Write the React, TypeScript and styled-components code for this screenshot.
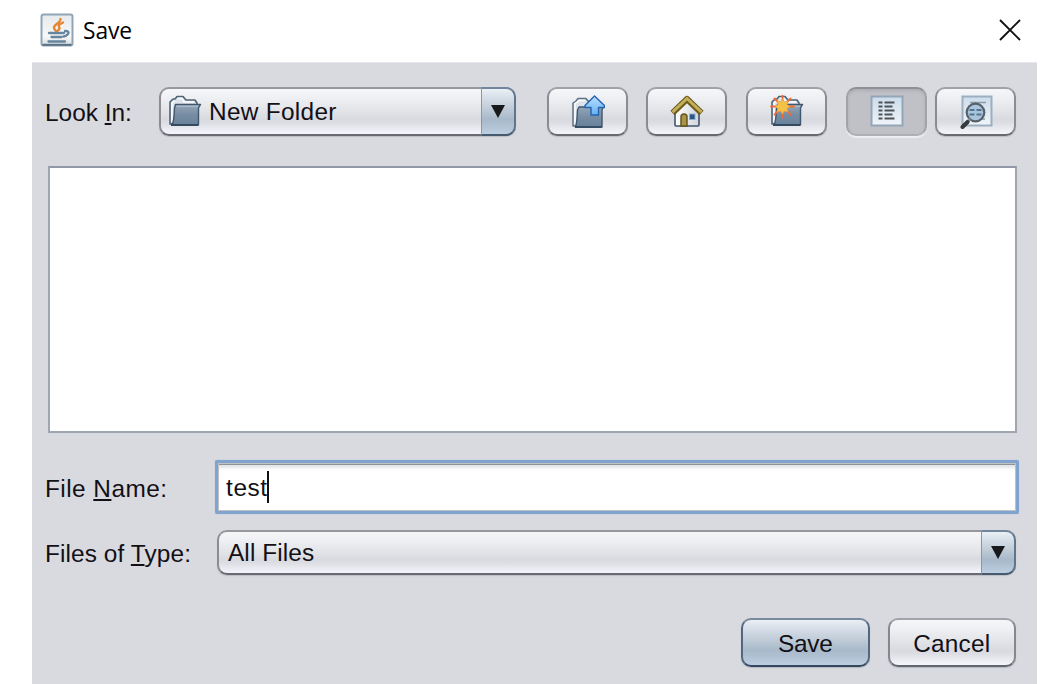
import React from "react";
import styled, { createGlobalStyle, css } from "styled-components";

const GlobalStyle = createGlobalStyle`
  *, *::before, *::after { box-sizing: border-box; }
  body { margin: 0; background: #fff; overflow: hidden; }
`;

const face = css`
  background: linear-gradient(#f7f8fa 0%, #eff0f3 22%, #e3e4e8 48%, #d8dae0 66%, #dddfe4 74%, #f2f4f9 94%, #f5f7fb 100%) border-box;
`;
const blueFace = css`
  background: linear-gradient(#f0f4f8 0%, #d8e0e9 20%, #bfcbd7 45%, #a8b9ca 66%, #adbfd0 76%, #c1d2e4 100%) border-box;
`;

const Dialog = styled.main`
  width: 1005px;
  height: 684px;
  margin-left: 32px;
  display: flex;
  flex-direction: column;
  font-family: "Liberation Sans", Arial, sans-serif;
  font-size: 24.4px;
  color: #121016;
`;

const TitleBar = styled.header`
  height: 62px;
  flex: none;
  display: flex;
  align-items: center;
  padding: 0 16px 2px 8px;
`;

const Title = styled.h1`
  flex: 1;
  margin: 2px 0 0 9px;
  font: 400 22.8px/32px "Open Sans", sans-serif;
  letter-spacing: -0.1px;
  color: #000;
`;

const CloseButton = styled.button`
  border: 0;
  padding: 0;
  background: none;
  width: 22px;
  height: 22px;
  display: flex;
`;

const Panel = styled.section`
  flex: 1;
  background: #d9dadf;
  border-top: 1px solid #e6e7ea;
  padding: 24px 21px 0 13px;
  display: flex;
  flex-direction: column;
`;

const Toolbar = styled.div`
  display: flex;
  height: 49px;
  flex: none;
`;

const Label = styled.label<{ $width: number; $height: number; $spacing?: number }>`
  flex: none;
  width: ${(p) => p.$width}px;
  line-height: ${(p) => p.$height}px;
  letter-spacing: ${(p) => p.$spacing ?? 0}px;
  white-space: nowrap;
`;

const Mnemonic = styled.span`
  text-decoration: underline;
  text-decoration-thickness: 2px;
  text-underline-offset: 2px;
  text-decoration-skip-ink: none;
`;

const Combo = styled.div<{ $width?: number; $height: number; $left: number }>`
  ${face}
  width: ${(p) => (p.$width ? `${p.$width}px` : "auto")};
  flex: ${(p) => (p.$width ? "none" : "1")};
  height: ${(p) => p.$height}px;
  display: flex;
  align-items: center;
  padding-left: ${(p) => p.$left}px;
  border: 2px solid #8b8d93;
  border-top-color: #96989e;
  border-bottom-color: #686b72;
  border-right: 0;
  border-radius: 10px;
  box-shadow: 0 1px 1px #bbbdc3;
`;

const ComboText = styled.span<{ $gap?: number; $spacing?: number }>`
  flex: 1;
  margin-left: ${(p) => p.$gap ?? 0}px;
  padding-top: 1px;
  letter-spacing: ${(p) => p.$spacing ?? 0}px;
  white-space: nowrap;
`;

const ComboArrow = styled.span`
  ${blueFace}
  align-self: stretch;
  width: 35px;
  margin: -2px 0;
  border: 2px solid #5e758c;
  border-top-color: #71869c;
  border-bottom-color: #465b70;
  border-left: 1px solid #8499ae;
  border-radius: 0 10px 10px 0;
  display: flex;
  align-items: center;
  justify-content: center;
`;

const ToolButton = styled.button<{ $left: number; $pressed?: boolean }>`
  ${face}
  flex: none;
  width: 81px;
  height: 49px;
  margin-left: ${(p) => p.$left}px;
  padding: 0;
  display: flex;
  align-items: center;
  justify-content: center;
  border: 2px solid #8b8c92;
  border-top-color: #a0a2a7;
  border-bottom-color: #686a70;
  border-radius: 10px;
  box-shadow: 0 1px 1px #bbbdc3;
  ${(p) =>
    p.$pressed &&
    css`
      background: #c0c1c6;
      border-color: #8e9095 #a2a3a9 #adafb4;
      box-shadow: 0 2px 1px #eceef2, inset 0 2px 3px #adaeb4;
    `}
`;

const FileList = styled.div`
  flex: none;
  height: 267px;
  margin: 30px -1px 0 3px;
  background: #fff;
  border: 2px solid #a0a6b0;
  border-top-color: #9299a6;
`;

const Row = styled.div<{ $top: number }>`
  display: flex;
  flex: none;
  margin-top: ${(p) => p.$top}px;
`;

const TextField = styled.div`
  flex: 1;
  height: 54px;
  margin-right: -3px;
  border: 3px solid #81a4cf;
  border-radius: 2px;
  background: #fff;
  box-shadow: 0 0 1px #8eafd7, inset 0 0 0 1px #bfc1c5, inset 0 2px 0 #8f9297, inset 0 5px 3px #e4e5e8;
  display: flex;
  align-items: center;
  padding: 2px 0 0 8px;
  letter-spacing: 0.6px;
`;

const Caret = styled.span`
  width: 2px;
  height: 32px;
  background: #111;
  margin: -2px 0 0 -1px;
`;

const Actions = styled.div`
  display: flex;
  justify-content: flex-end;
  gap: 18px;
  margin-top: 41px;
`;

const ActionButton = styled.button<{ $primary?: boolean }>`
  ${(p) => (p.$primary ? blueFace : face)}
  width: 128.5px;
  height: 49px;
  border: 2px solid ${(p) => (p.$primary ? "#52677e" : "#85878d")};
  border-top-color: ${(p) => (p.$primary ? "#788a9c" : "#a1a3a9")};
  border-bottom-color: ${(p) => (p.$primary ? "#34495f" : "#63666d")};
  border-radius: 10px;
  box-shadow: 0 1px 1px #b5b8bf;
  padding: 2px 0 0;
  font: inherit;
  color: inherit;
  letter-spacing: ${(p) => (p.$primary ? "-0.3px" : "0.2px")};
`;

const FolderShape = () => (
  <>
    <path d="M2 29V7L5 4H7L9 1.5H15L18 5H27L29 8V12L7 28Z" fill="#dce3ea" stroke="#4e6376" strokeWidth="1.6" strokeLinejoin="round" />
    <path d="M4 27V8L7 6M10 3.5H14L16 7H26" fill="none" stroke="#fafcfe" strokeWidth="1.5" />
    <path d="M7.5 9.5H32.5L30.5 13V30H4Q6 27 6.5 13Z" fill="url(#folderFront)" stroke="#40566c" strokeWidth="1.4" strokeLinejoin="round" />
    <path d="M8.5 11.3H30" stroke="#a9b9c8" strokeWidth="1.5" />
    <path d="M3 30H30" stroke="#344a60" strokeWidth="2" />
  </>
);

const FolderIcon = () => (
  <svg width="34" height="34" viewBox="0 0 34 34">
    <FolderShape />
  </svg>
);

const UpFolderIcon = () => (
  <svg width="34" height="34" viewBox="0 0 34 34">
    <path d="M2 31V8L5 6L7 3.5H15L17 6H27V31Z" fill="#dce3ea" stroke="#5d7184" strokeWidth="1.5" strokeLinejoin="round" />
    <path d="M4 29V9L8 5.5H14" fill="none" stroke="#fafcfe" strokeWidth="1.5" />
    <path d="M8 12H32L31 15V32H4.500Q6 28 6.500 15Z" fill="url(#folderFront)" stroke="#40566c" strokeWidth="1.4" strokeLinejoin="round" />
    <path d="M4 32H31" stroke="#344a60" strokeWidth="1.8" />
    <path d="M23.500 1L33.500 10.500V12.500H27.500V20H20V12.500H14V10.500Z" fill="url(#arrowBlue)" stroke="#2364ad" strokeWidth="1.4" strokeLinejoin="round" />
  </svg>
);

const HomeIcon = () => (
  <svg width="34" height="34" viewBox="0 0 34 34">
    <path d="M5 15L17 4L29 15V30Q29 31 28 31H6Q5 31 5 30Z" fill="url(#houseWall)" stroke="#40566d" strokeWidth="1.6" />
    <path d="M11 31V22Q11 19 14 19T17 22V31Z" fill="#a99549" stroke="#65551d" strokeWidth="1.5" />
    <rect x="19.5" y="19" width="5.5" height="5.5" fill="#295786" stroke="#8faccc" />
    <path d="M2.500 18L17 4L31.500 18" fill="none" stroke="#6f5b1b" strokeWidth="6" strokeLinejoin="round" />
    <path d="M2.500 17.200L17 3.500L31.500 17.200" fill="none" stroke="#c2b05b" strokeWidth="3" />
  </svg>
);

const NewFolderIcon = () => (
  <svg width="34" height="34" viewBox="0 0 34 34">
    <FolderShape />
    <path d="M12.500 .7V22.500M1 11.500H24M4.500 3.500L20.500 19.500M20.500 3.500L4.500 19.500" stroke="#ee6c37" strokeWidth="1.8" strokeLinecap="round" />
    <path d="M12.500 4L14.400 7L18 6L17 9.600L20 11.500L17 13.400L18 17L14.400 16L12.500 19L10.600 16L7 17L8 13.400L5 11.500L8 9.600L7 6L10.600 7Z" fill="#f4c247" stroke="#f19b3d" strokeWidth=".8" />
  </svg>
);

const ListIcon = () => (
  <svg width="34" height="34" viewBox="0 0 34 34">
    <rect x="1.5" y="1.5" width="31" height="29" fill="url(#pageBlue)" stroke="#93a6b8" strokeWidth="2" />
    <path d="M8.500 7.500h4m2 0h10m-16 4h4m2 0h8m-14 4h4m2 0h10m-16 4h4m2 0h8m-14 4h4m2 0h10" fill="none" stroke="#4b5359" strokeWidth="2" />
  </svg>
);

const DetailsIcon = () => (
  <svg width="34" height="34" viewBox="0 0 34 34">
    <rect x="3.500" y="1.500" width="29" height="29" fill="url(#pageBlue)" stroke="#9cafc0" strokeWidth="2" />
    <path d="M11 7.500H27M9 24H16M21 24H26" stroke="#8c9aa6" strokeWidth="1.3" />
    <circle cx="16.5" cy="17.5" r="8.8" fill="#a9c5dd" stroke="#596168" strokeWidth="2.2" />
    <path d="M10.500 15h5m2 0h5m-12 4.500h5m2 0h5" stroke="#53748e" strokeWidth="2" />
    <path d="M11 24L8 27" stroke="#8e9499" strokeWidth="3" />
    <path d="M8.500 27L3.500 32" stroke="#35393c" strokeWidth="4" strokeLinecap="round" />
  </svg>
);

const JavaIcon = () => (
  <svg width="34" height="34" viewBox="0 0 34 34">
    <rect x="1.5" y="1.5" width="31" height="31" rx="2" fill="url(#javaTile)" stroke="#8fa5b8" strokeWidth="2" />
    <path d="M2.500 31.800H31.500" stroke="#587288" strokeWidth="2" />
    <path d="M20.500 6C21 10 13 11.500 14 15Q14.500 17 16 18M23 9.500C17 12 19 13.500 19.500 15Q19.500 17 17 18" fill="none" stroke="#e48734" strokeWidth="2.4" strokeLinecap="round" />
    <path d="M9 20H24M11.500 24H21.500M8.500 28.500H25M25 18Q30 18 28 21Q26 23.500 23.500 23.500" fill="none" stroke="#6685a0" strokeWidth="2.3" strokeLinecap="round" />
  </svg>
);

const DownArrow = () => (
  <svg width="14" height="13" viewBox="0 0 14 13">
    <path d="M0 0H14L7 13Z" fill="#17191b" />
  </svg>
);

const PaintDefs = () => (
  <svg width="0" height="0" style={{ position: "absolute" }} aria-hidden="true">
    <defs>
      <linearGradient id="folderFront" x2="0" y2="1"><stop stopColor="#94a7ba" /><stop offset=".5" stopColor="#778da3" /><stop offset="1" stopColor="#68829b" /></linearGradient>
      <linearGradient id="arrowBlue" x2="0" y2="1"><stop stopColor="#b9dfff" /><stop offset="1" stopColor="#65aff4" /></linearGradient>
      <linearGradient id="houseWall"><stop stopColor="#fff" /><stop offset="1" stopColor="#d1d5da" /></linearGradient>
      <linearGradient id="pageBlue" x2="0" y2="1"><stop stopColor="#ccdceb" /><stop offset="1" stopColor="#f0f5f9" /></linearGradient>
      <linearGradient id="javaTile" x2="0" y2="1"><stop stopColor="#e6eaec" /><stop offset=".7" stopColor="#f8f8f7" /><stop offset="1" stopColor="#d9dddf" /></linearGradient>
    </defs>
  </svg>
);

export default function App() {
  return (
    <>
      <GlobalStyle />
      <PaintDefs />
      <Dialog>
        <TitleBar>
          <JavaIcon />
          <Title>Save</Title>
          <CloseButton aria-label="Close">
            <svg width="22" height="22" viewBox="0 0 22 22"><path d="M1 1L21 21M21 1L1 21" stroke="#111" strokeWidth="1.9" /></svg>
          </CloseButton>
        </TitleBar>
        <Panel>
          <Toolbar>
            <Label $width={114} $height={51}>Look <Mnemonic>I</Mnemonic>n:</Label>
            <Combo $width={357} $height={49} $left={7}>
              <FolderIcon />
              <ComboText $gap={7} $spacing={0.3}>New Folder</ComboText>
              <ComboArrow><DownArrow /></ComboArrow>
            </Combo>
            <ToolButton $left={31} aria-label="Up One Level"><UpFolderIcon /></ToolButton>
            <ToolButton $left={18} aria-label="Home"><HomeIcon /></ToolButton>
            <ToolButton $left={19} aria-label="Create New Folder"><NewFolderIcon /></ToolButton>
            <ToolButton $left={19} $pressed aria-label="List"><ListIcon /></ToolButton>
            <ToolButton $left={8} aria-label="Details"><DetailsIcon /></ToolButton>
          </Toolbar>
          <FileList />
          <Row $top={27}>
            <Label $width={170} $height={57} $spacing={0.45}>File <Mnemonic>N</Mnemonic>ame:</Label>
            <TextField>test<Caret /></TextField>
          </Row>
          <Row $top={13}>
            <Label $width={172} $height={47} $spacing={0.1}>Files of <Mnemonic>T</Mnemonic>ype:</Label>
            <Combo $height={45} $left={9}>
              <ComboText $spacing={0.1}>All Files</ComboText>
              <ComboArrow><DownArrow /></ComboArrow>
            </Combo>
          </Row>
          <Actions>
            <ActionButton $primary>Save</ActionButton>
            <ActionButton>Cancel</ActionButton>
          </Actions>
        </Panel>
      </Dialog>
    </>
  );
}
